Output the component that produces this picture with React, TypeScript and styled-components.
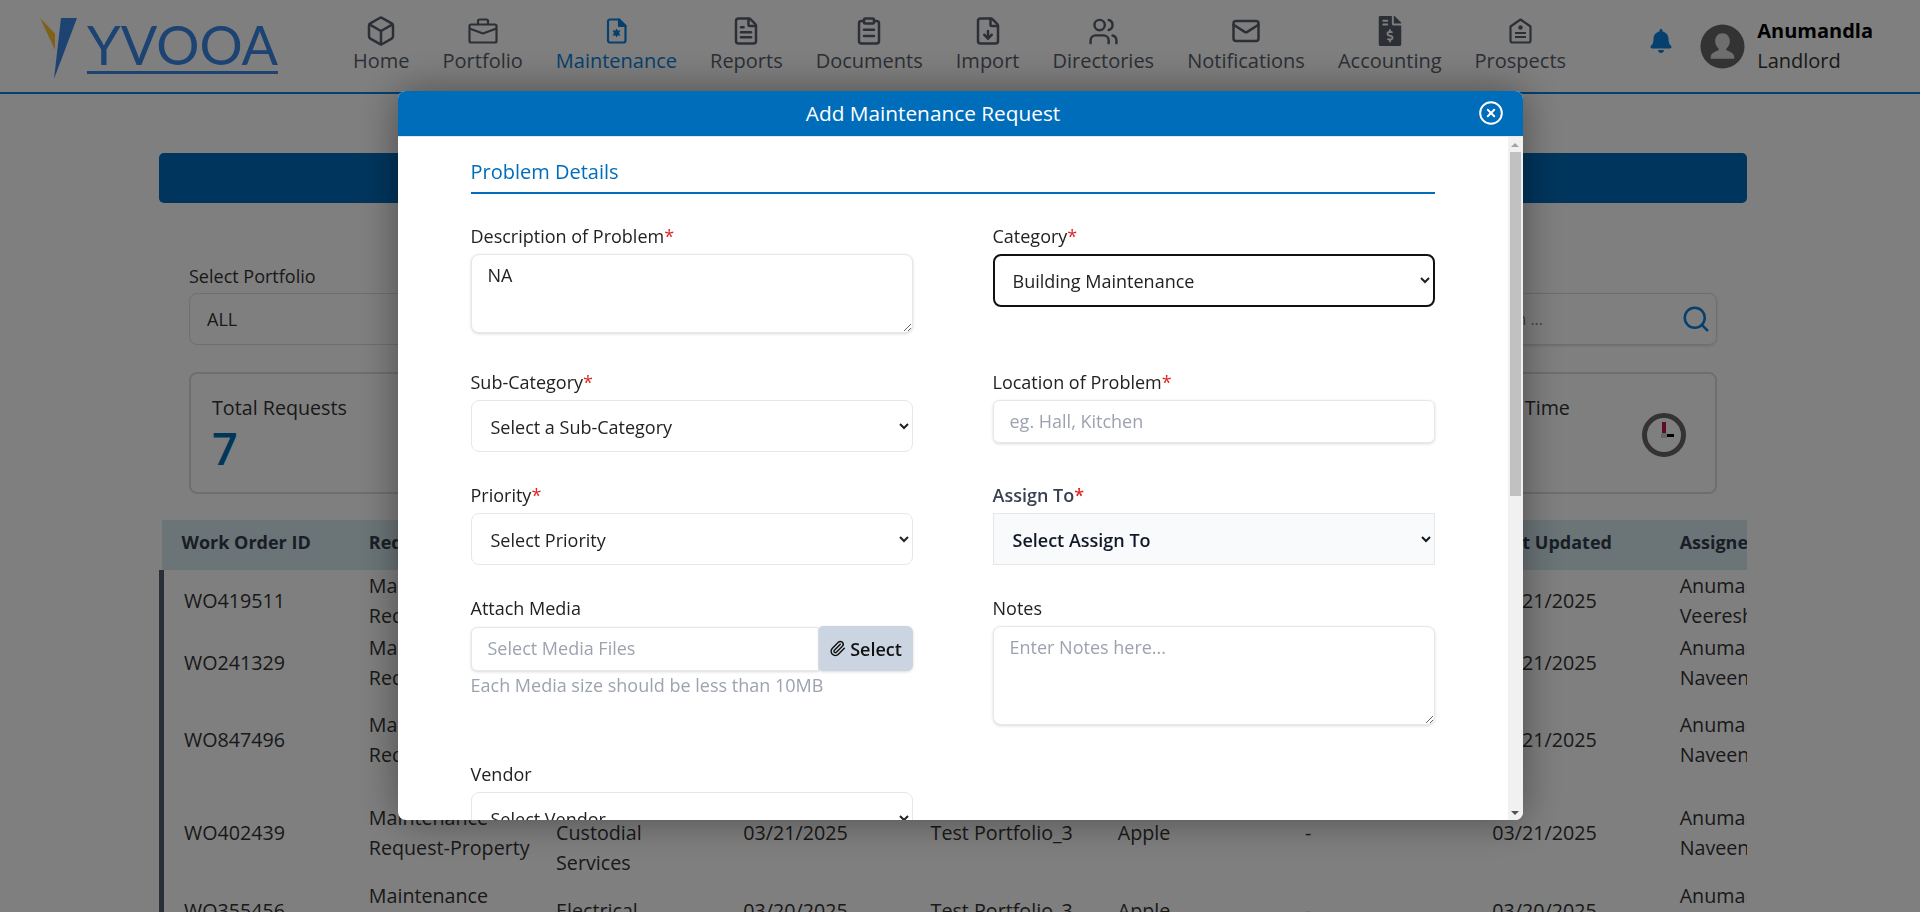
import React from "react";
import styled, { createGlobalStyle } from "styled-components";
import { Box, CircleX, FileDown, FileText, Mail, Paperclip, Search, Users } from "lucide-react";
import { FaBell, FaFileInvoiceDollar } from "react-icons/fa";

const GlobalStyle = createGlobalStyle`
    html, body {
        margin: 0;
        height: 100%;
        overflow: hidden;
        background: #fff;
        font-family: "Open Sans", "Liberation Sans", sans-serif;
        color: #333;
    }
    * { box-sizing: border-box; }
`;

const navItems = [
    { label: "Home", icon: <Box size={32} strokeWidth={1.9} /> },
    { label: "Portfolio", icon: <BriefcaseIcon /> },
    { label: "Maintenance", icon: <MaintenanceIcon />, active: true },
    { label: "Reports", icon: <FileText size={30} strokeWidth={2} /> },
    { label: "Documents", icon: <ClipboardIcon /> },
    { label: "Import", icon: <FileDown size={30} strokeWidth={2} /> },
    { label: "Directories", icon: <Users size={31} strokeWidth={1.9} /> },
    { label: "Notifications", icon: <Mail size={30} strokeWidth={2} /> },
    { label: "Accounting", icon: <FaFileInvoiceDollar size={30} /> },
    { label: "Prospects", icon: <ProspectIcon /> },
];

const columns = ["Work Order ID", "Request", "Category", "Created", "Portfolio", "Property", "Vendor", "Last Updated", "Assigned To"];

const rows = [
    { h: 61, cells: ["WO419511", "Maintenance\nRequest", "Building\nMaintenance", "03/21/2025", "Test Portfolio_3", "Apple", "-", "03/21/2025", "Anumandla\nVeeresh"] },
    { h: 63, cells: ["WO241329", "Maintenance\nRequest", "Building\nMaintenance", "03/21/2025", "Test Portfolio_3", "Apple", "-", "03/21/2025", "Anumandla\nNaveen"] },
    { h: 92, cells: ["WO847496", "Maintenance\nRequest", "Building\nMaintenance", "03/21/2025", "Test Portfolio_3", "Apple", "-", "03/21/2025", "Anumandla\nNaveen"] },
    { h: 94, cells: ["WO402439", "Maintenance\nRequest-Property", "Custodial\nServices", "03/21/2025", "Test Portfolio_3", "Apple", "-", "03/21/2025", "Anumandla\nNaveen"] },
    { h: 62, cells: ["WO355456", "Maintenance\nRequest-Property", "Electrical\nServices", "03/20/2025", "Test Portfolio_3", "Apple", "-", "03/20/2025", "Anumandla\nNaveen"] },
];

function BriefcaseIcon() {
    return (
        <svg width="30" height="26" viewBox="0 0 30 26" fill="none" stroke="currentColor" strokeWidth="2.2" strokeLinejoin="round">
            <rect x="1.5" y="6.5" width="27" height="18" rx="1.5" />
            <path d="M10 6.5V3a1.5 1.5 0 0 1 1.5-1.5h7A1.5 1.5 0 0 1 20 3v3.5" />
            <path d="M1.5 10.5 15 15.5l13.500-5" />
        </svg>
    );
}

function MaintenanceIcon() {
    return (
        <svg width="21" height="26" viewBox="0 0 21 26" fill="none" stroke="currentColor" strokeWidth="2.2" strokeLinejoin="round">
            <path d="M4 1.500h9l6.500 6.500v14.500a2 2 0 0 1-2 2H4a2 2 0 0 1-2-2v-19a2 2 0 0 1 2-2z" />
            <path d="M13 1.500V8h6.500z" fill="currentColor" />
            <path d="M10.500 10.500l4 7h-8zM10.500 19.500l-4-7h8z" fill="currentColor" stroke="none" />
        </svg>
    );
}

function ClipboardIcon() {
    return (
        <svg width="30" height="30" viewBox="0 0 24 24" fill="none" stroke="currentColor" strokeWidth="2" strokeLinecap="round" strokeLinejoin="round">
            <rect x="8" y="2" width="8" height="4" rx="1" />
            <path d="M16 4h2a2 2 0 0 1 2 2v14a2 2 0 0 1-2 2H6a2 2 0 0 1-2-2V6a2 2 0 0 1 2-2h2" />
            <path d="M8 11h8M8 16h8" />
        </svg>
    );
}

function ProspectIcon() {
    return (
        <svg width="23" height="26" viewBox="0 0 23 26" fill="none" stroke="currentColor" strokeWidth="2.200" strokeLinejoin="round">
            <path d="M1.500 8.500 11.500 1.500l10 7v14a2 2 0 0 1-2 2h-16a2 2 0 0 1-2-2z" />
            <circle cx="11.500" cy="9.500" r="2.200" fill="currentColor" stroke="none" />
            <path d="M6 15h11M6 19h11" />
        </svg>
    );
}

function Avatar() {
    return (
        <svg width="45" height="45" viewBox="0 0 46 46">
            <circle cx="23" cy="23" r="22.500" fill="#666" />
            <path d="M23 9.500c-4.500 0-7.500 3.500-7.500 8 0 3.200 1.200 6 3.500 7.600v1.700c-3.500 1.200-8 3-8 7.200v1.500h24v-1.500c0-4.200-4.500-6-8-7.200v-1.700c2.300-1.600 3.500-4.400 3.500-7.600 0-4.500-3-8-7.500-8z" fill="#dcdcdc" />
        </svg>
    );
}

function ClockIcon() {
    return (
        <svg width="46" height="46" viewBox="0 0 46 46">
            <circle cx="23" cy="23" r="19.500" fill="#fff" stroke="#666" strokeWidth="5" />
            <rect x="21" y="10" width="4" height="13" fill="#c0105a" />
            <rect x="23" y="22" width="10" height="3" fill="#000" />
            <rect x="20" y="21" width="6" height="5" fill="#ccc" />
        </svg>
    );
}

const App = () => {
    return (
        <>
            <GlobalStyle />
            <TopBar>
                <Logo>
                    <svg width="40" height="64" viewBox="0 0 40 64">
                        <path d="M0 1 15 16.500V33z" fill="#ffb300" opacity="0.8" />
                        <path d="M21 1H37L14 62z" fill="#3a86e6" />
                    </svg>
                    <Wordmark>YVOOA</Wordmark>
                </Logo>
                <Nav>
                    {navItems.map((item) => (
                        <NavItem key={item.label} $active={item.active}>
                            <IconSlot>{item.icon}</IconSlot>
                            <span>{item.label}</span>
                        </NavItem>
                    ))}
                </Nav>
                <UserArea>
                    <BellSlot>
                        <FaBell size={24} />
                    </BellSlot>
                    <Avatar />
                    <UserText>
                        <strong>Anumandla</strong>
                        <span>Landlord</span>
                    </UserText>
                </UserArea>
            </TopBar>

            <Main>
                <BlueBar />
                <Filters>
                    <FilterField>
                        <FilterLabel>Select Portfolio</FilterLabel>
                        <FilterBox>ALL</FilterBox>
                    </FilterField>
                    <FilterField>
                        <FilterLabel>&nbsp;</FilterLabel>
                        <FilterBox $end>
                            <SearchHint>Search ...</SearchHint>
                            <Search size={30} strokeWidth={2} color="#0a80dd" />
                        </FilterBox>
                    </FilterField>
                </Filters>
                <Stats>
                    <StatCard>
                        <StatLabel>Total Requests</StatLabel>
                        <StatValue>7</StatValue>
                    </StatCard>
                    <StatCard />
                    <StatCard />
                    <StatCard>
                        <StatLabel>Avg. Completion Time</StatLabel>
                        <ClockSlot>
                            <ClockIcon />
                        </ClockSlot>
                    </StatCard>
                </Stats>
                <TableWrap>
                    <Table>
                        <thead>
                            <tr>
                                {columns.map((c) => (
                                    <th key={c}>{c}</th>
                                ))}
                            </tr>
                        </thead>
                        <tbody>
                            {rows.map((row) => (
                                <Row key={row.cells[0]} $h={row.h}>
                                    {row.cells.map((cell, i) => (
                                        <td key={i}>{i === 2 ? <LowCell>{cell}</LowCell> : cell}</td>
                                    ))}
                                </Row>
                            ))}
                        </tbody>
                    </Table>
                </TableWrap>
            </Main>

            <Overlay>
                <Modal>
                    <ModalHeader>
                        <ModalTitle>Add Maintenance Request</ModalTitle>
                        <CircleX size={26} strokeWidth={1.8} color="#fff" />
                    </ModalHeader>
                    <BodyRow>
                        <ModalBody>
                            <SectionTitle>Problem Details</SectionTitle>
                            <FormGrid>
                                <Field>
                                    <Label>
                                        Description of Problem<Req>*</Req>
                                    </Label>
                                    <TextArea $h={79} defaultValue="NA" />
                                </Field>
                                <Field>
                                    <Label>
                                        Category<Req>*</Req>
                                    </Label>
                                    <Select $focused defaultValue="b">
                                        <option value="b">Building Maintenance</option>
                                    </Select>
                                </Field>
                                <Field>
                                    <Label>
                                        Sub-Category<Req>*</Req>
                                    </Label>
                                    <Select>
                                        <option>Select a Sub-Category</option>
                                    </Select>
                                </Field>
                                <Field>
                                    <Label>
                                        Location of Problem<Req>*</Req>
                                    </Label>
                                    <TextInput placeholder="eg. Hall, Kitchen" />
                                </Field>
                                <Field>
                                    <Label>
                                        Priority<Req>*</Req>
                                    </Label>
                                    <Select>
                                        <option>Select Priority</option>
                                    </Select>
                                </Field>
                                <Field>
                                    <Label $strong>
                                        Assign To<Req>*</Req>
                                    </Label>
                                    <Select $plain>
                                        <option>Select Assign To</option>
                                    </Select>
                                </Field>
                                <Field>
                                    <Label>Attach Media</Label>
                                    <MediaRow>
                                        <MediaInput placeholder="Select Media Files" />
                                        <MediaButton>
                                            <Paperclip size={17} strokeWidth={2} />
                                            Select
                                        </MediaButton>
                                    </MediaRow>
                                    <Hint>Each Media size should be less than 10MB</Hint>
                                </Field>
                                <Field>
                                    <Label>Notes</Label>
                                    <TextArea $h={99} placeholder="Enter Notes here..." />
                                </Field>
                                <Field>
                                    <Label>Vendor</Label>
                                    <Select>
                                        <option>Select Vendor</option>
                                    </Select>
                                </Field>
                            </FormGrid>
                        </ModalBody>
                        <ScrollBar>
                            <ScrollArrow>
                                <ArrowUp />
                            </ScrollArrow>
                            <ScrollTrack>
                                <ScrollThumb />
                            </ScrollTrack>
                            <ScrollArrow>
                                <ArrowDown />
                            </ScrollArrow>
                        </ScrollBar>
                    </BodyRow>
                </Modal>
            </Overlay>
        </>
    );
};

export default App;

const TopBar = styled.header`
    height: 94px;
    border-bottom: 2px solid #0a80dd;
    display: flex;
    align-items: flex-start;
    padding-left: 40px;
`;

const Logo = styled.div`
    width: 313px;
    display: flex;
    align-items: flex-start;
    padding-top: 17px;
    gap: 7px;
`;

const Wordmark = styled.div`
    margin-top: 3px;
    width: 191px;
    height: 54px;
    border-bottom: 3px solid #3a86e6;
    color: #3a86e6;
    font-family: Lato, sans-serif;
    font-size: 54px;
    line-height: 50px;
    text-align: center;
`;

const Nav = styled.nav`
    display: flex;
    gap: 33px;
    padding-top: 15px;
`;

const NavItem = styled.div<{ $active?: boolean }>`
    display: flex;
    flex-direction: column;
    align-items: center;
    color: ${(p) => (p.$active ? "#0a80dd" : "#59606c")};
    font-size: 20px;
    line-height: 28px;
`;

const IconSlot = styled.div`
    height: 32px;
    display: flex;
    align-items: center;
    justify-content: center;
`;

const UserArea = styled.div`
    margin-left: auto;
    padding: 24px 47px 0 0;
    display: flex;
    align-items: flex-start;
    gap: 12px;
`;

const BellSlot = styled.div`
    color: #0a80dd;
    margin: 5px 15px 0 0;
`;

const UserText = styled.div`
    display: flex;
    flex-direction: column;
    margin-top: -8px;
    font-size: 20px;
    line-height: 30px;
    color: #333;

    strong {
        color: #000;
    }
`;

const Main = styled.main`
    width: 1588px;
    margin: 59px 0 0 159px;
`;

const BlueBar = styled.div`
    height: 50px;
    border-radius: 5px;
    background: #006cbb;
`;

const Filters = styled.div`
    margin: 60px 30px 0;
    display: grid;
    grid-template-columns: 1fr 1fr;
    gap: 30px;
`;

const FilterField = styled.div`
    display: flex;
    flex-direction: column;
`;

const FilterLabel = styled.div`
    font-size: 18px;
    line-height: 26px;
    margin-bottom: 4px;
`;

const FilterBox = styled.div<{ $end?: boolean }>`
    height: 52px;
    border: 1px solid #ddd;
    border-radius: 8px;
    padding: 0 5px 0 17px;
    display: flex;
    align-items: center;
    justify-content: ${(p) => (p.$end ? "flex-end" : "flex-start")};
    font-size: 18px;
    box-shadow: ${(p) => (p.$end ? "0 1px 3px rgba(0, 0, 0, 0.15)" : "none")};
`;

const SearchHint = styled.span`
    margin-right: 138px;
    color: #888;
    font-size: 16px;
`;

const Stats = styled.div`
    margin: 27px 30px 0;
    display: grid;
    grid-template-columns: repeat(4, 1fr);
    gap: 16px;
`;

const StatCard = styled.div`
    position: relative;
    height: 122px;
    border: 2px solid #ddd;
    border-radius: 8px;
    padding: 21px;
`;

const StatLabel = styled.div`
    font-size: 19.7px;
    line-height: 26px;
    white-space: nowrap;
`;

const StatValue = styled.div`
    margin-top: 2px;
    color: #006cb5;
    font-size: 45px;
    font-weight: 600;
    line-height: 50px;
`;

const ClockSlot = styled.div`
    position: absolute;
    top: 38px;
    right: 28px;
`;

const TableWrap = styled.div`
    margin-top: 26px;
    overflow: hidden;
`;

const Table = styled.table`
    width: 1688px;
    table-layout: fixed;
    border-collapse: collapse;

    th {
        height: 50px;
        padding: 0 0 7px 20px;
        background: #d6e9ef;
        color: #333d4d;
        font-size: 18px;
        font-weight: 700;
        text-align: left;
        white-space: nowrap;
    }

    td {
        padding: 0 0 0 20px;
        font-size: 19.7px;
        line-height: 30px;
        white-space: pre;
    }
`;

const Row = styled.tr<{ $h: number }>`
    height: ${(p) => p.$h}px;
    border-left: 5px solid #555d6e;
`;

const LowCell = styled.div`
    margin: 15px 0 -15px;
`;

const Overlay = styled.div`
    position: fixed;
    inset: 0;
    background: rgba(0, 0, 0, 0.5);
    display: flex;
    justify-content: center;
    align-items: flex-start;
    padding-top: 91px;
`;

const Modal = styled.div`
    width: 1125px;
    height: 729px;
    border-radius: 8px;
    background: #fff;
    display: flex;
    flex-direction: column;
    overflow: hidden;
    box-shadow: 0 0 40px rgba(0, 0, 0, 0.4);
`;

const ModalHeader = styled.div`
    height: 46px;
    flex: none;
    background: #006dbb;
    border-bottom: 1px solid #e5e7eb;
    display: flex;
    align-items: center;
    gap: 9px;
    padding: 0 19px 2px 0;
    color: #fff;
`;

const ModalTitle = styled.div`
    flex: 1;
    text-align: center;
    font-size: 20.8px;
    font-weight: 500;
`;

const BodyRow = styled.div`
    flex: 1;
    min-height: 0;
    display: flex;
`;

const ModalBody = styled.div`
    flex: 1;
    min-width: 0;
    overflow: hidden;
    padding: 22px 73px 0;
`;

const ScrollBar = styled.div`
    width: 15px;
    flex: none;
    display: flex;
    flex-direction: column;
    background: #f1f1f1;
`;

const ScrollArrow = styled.div`
    height: 15px;
    flex: none;
    display: flex;
    align-items: center;
    justify-content: center;
`;

const ArrowUp = styled.span`
    border: 4px solid transparent;
    border-top: none;
    border-bottom: 4px solid #a3a3a3;
`;

const ArrowDown = styled.span`
    border: 4px solid transparent;
    border-bottom: none;
    border-top: 4px solid #505050;
`;

const ScrollTrack = styled.div`
    flex: 1;
    padding: 0 2px;
`;

const ScrollThumb = styled.div`
    height: 344px;
    background: #c1c1c1;
`;

const SectionTitle = styled.div`
    height: 35px;
    border-bottom: 2px solid #006dbb;
    color: #006dbb;
    font-size: 20px;
    line-height: 26px;
`;

const FormGrid = styled.div`
    margin-top: 31px;
    display: grid;
    grid-template-columns: 1fr 1fr;
    grid-auto-rows: min-content;
    column-gap: 80px;
    row-gap: 32px;
`;

const Field = styled.div`
    display: flex;
    flex-direction: column;
    align-items: stretch;
`;

const Label = styled.label<{ $strong?: boolean }>`
    font-size: 18px;
    line-height: 22px;
    margin-bottom: 7px;
    font-weight: ${(p) => (p.$strong ? 600 : 400)};
    color: ${(p) => (p.$strong ? "#374151" : "#222")};
`;

const Req = styled.span`
    color: #e02424;
`;

const TextArea = styled.textarea<{ $h: number }>`
    height: ${(p) => p.$h}px;
    margin-bottom: 6px;
    border: 1px solid #e5e7eb;
    border-radius: 8px;
    padding: 8px 16px;
    font-family: inherit;
    font-size: 18px;
    color: #222;
    box-shadow: 0 1px 3px rgba(0, 0, 0, 0.15);

    &::placeholder {
        color: #9ca3af;
    }
`;

const Select = styled.select<{ $focused?: boolean; $plain?: boolean }>`
    height: ${(p) => (p.$focused ? 53 : 52)}px;
    border: ${(p) => (p.$focused ? "2px solid #111" : "1px solid #e5e7eb")};
    border-radius: ${(p) => (p.$plain ? "0" : "8px")};
    background: ${(p) => (p.$plain ? "#f9fafb" : "#fff")};
    padding: ${(p) => (p.$focused ? "0 0 0 14px" : "2px 1px 0 15px")};
    font-family: inherit;
    font-size: 18px;
    font-weight: ${(p) => (p.$plain ? 600 : 400)};
    color: ${(p) => (p.$plain ? "#111827" : "#222")};
`;

const TextInput = styled.input`
    height: 43px;
    border: 1px solid #e5e7eb;
    border-radius: 6px;
    padding: 0 16px 2px;
    font-family: inherit;
    font-size: 18px;
    box-shadow: 0 1px 3px rgba(0, 0, 0, 0.15);

    &::placeholder {
        color: #9ca3af;
    }
`;

const MediaRow = styled.div`
    display: flex;
    align-items: center;
`;

const MediaInput = styled(TextInput)`
    flex: 1;
    min-width: 0;
    height: 44px;
    border-radius: 6px 0 0 6px;
`;

const MediaButton = styled.button`
    width: 94px;
    height: 45px;
    flex: none;
    border: none;
    border-radius: 4px 6px 6px 4px;
    background: #cbd5e1;
    display: flex;
    align-items: center;
    justify-content: center;
    gap: 4px;
    padding: 0;
    font-family: inherit;
    font-size: 18px;
    font-weight: 600;
    color: #111;
    box-shadow: 0 1px 3px rgba(0, 0, 0, 0.15);
`;

const Hint = styled.div`
    color: #9ca3af;
    font-size: 18px;
    line-height: 24px;
    margin-top: 2px;
`;
